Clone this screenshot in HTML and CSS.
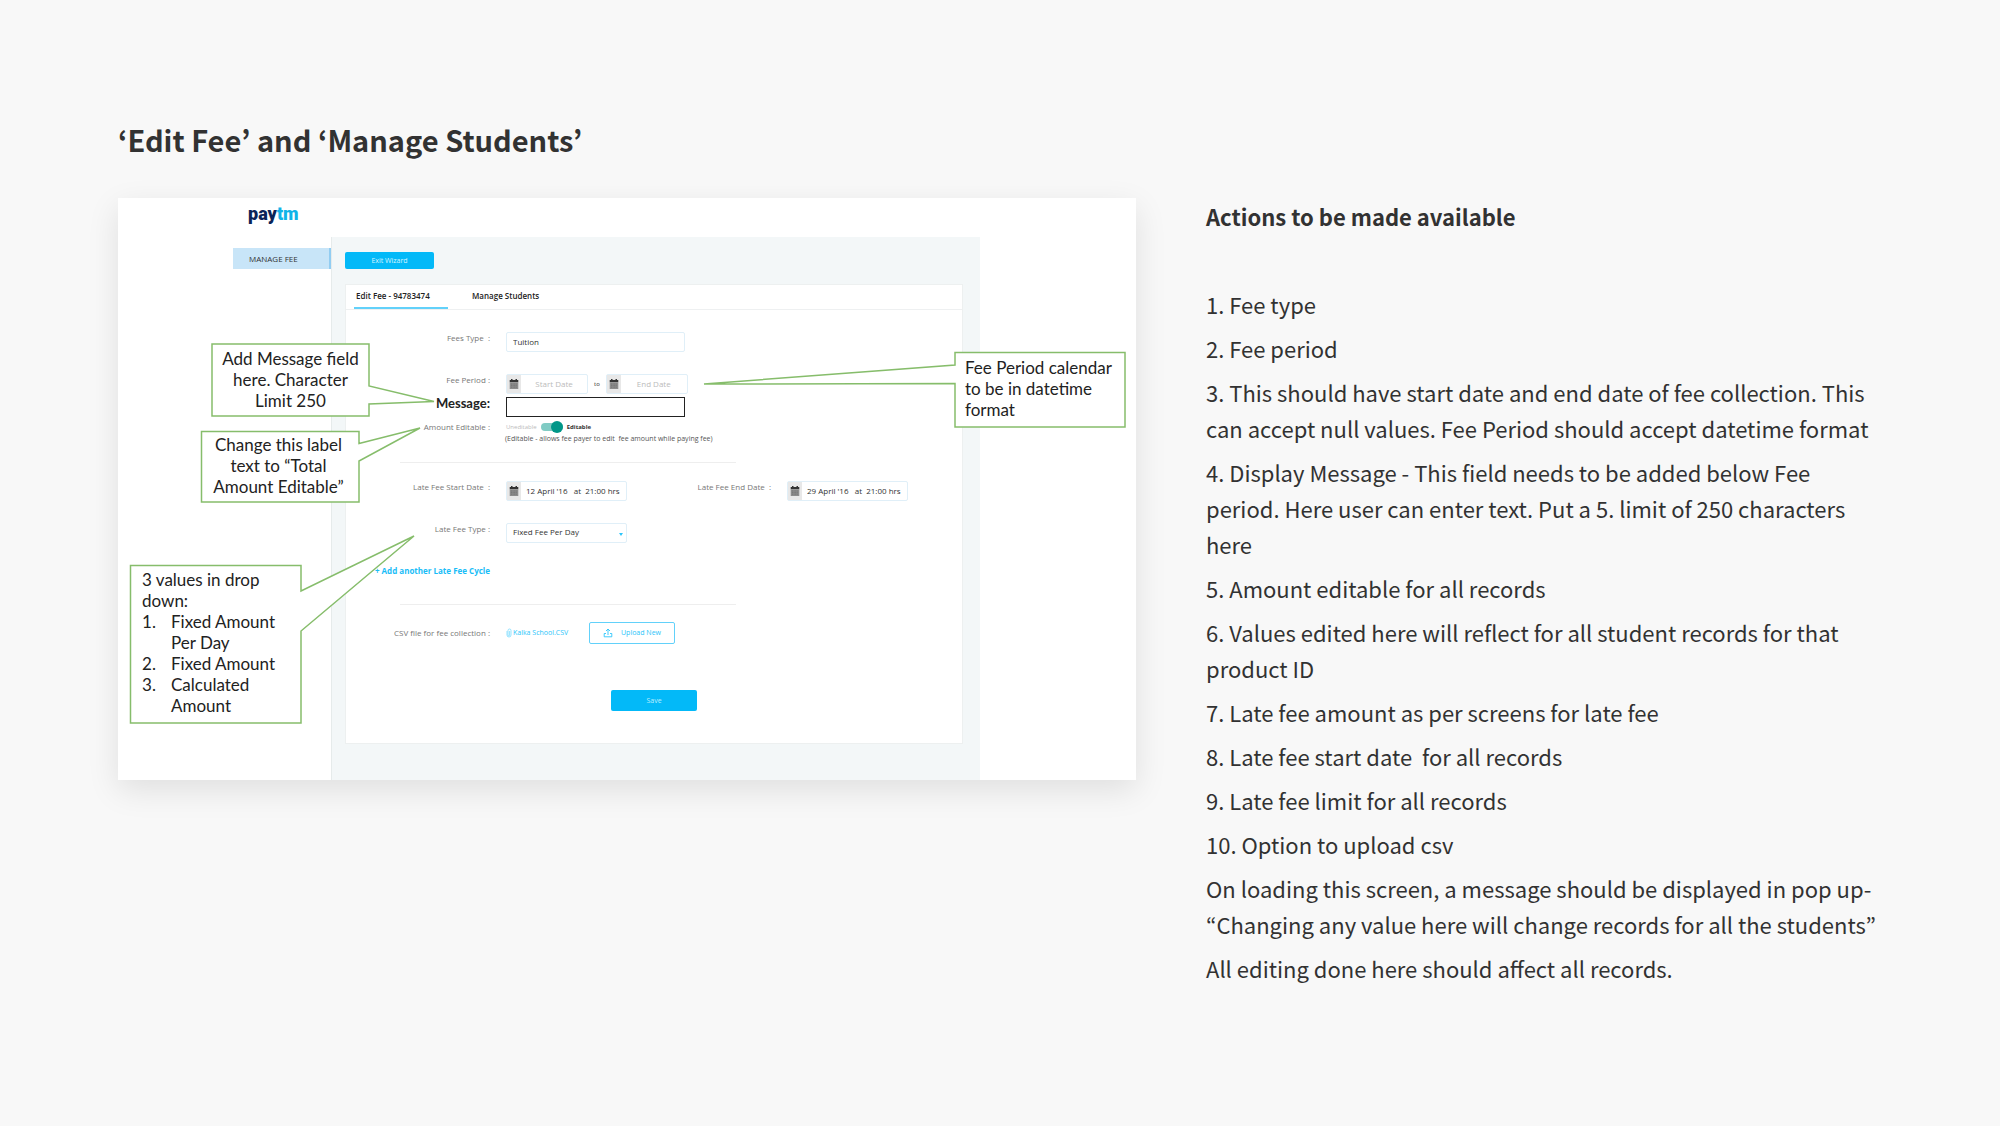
FILE: index.html
```html
<!DOCTYPE html>
<html lang="en">
<head>
<meta charset="utf-8">
<title>Edit Fee and Manage Students</title>
<link rel="stylesheet" href="styles.css">
</head>
<body>
<svg class="defs" aria-hidden="true">
  <symbol id="calendar" viewBox="0 0 10 10">
    <path d="M1 1h1V0h1.500v1h3V0H8v1h1.300v2.300H.7V1z" fill="#333"/>
    <path d="M.7 3.300h8.600V10H.7z" fill="#8c8c8c"/>
    <path d="M2 5h6M2 6.600h6M2 8.200h6" stroke="#666" stroke-width=".6" stroke-dasharray="1 .6"/>
  </symbol>
</svg>
<main class="page">
  <h1 class="title">‘Edit Fee’ and ‘Manage Students’</h1>
  <div class="columns">
    <section class="screen">
      <header class="top"><span class="logo">pay<span class="logo-tm">tm</span></span></header>
      <div class="body">
        <nav class="side"><a class="side-link" href="#fee">MANAGE FEE</a></nav>
        <div class="work">
          <button class="exit" type="button">Exit Wizard</button>
          <form class="panel">
            <div class="tabs">
              <a class="tab active" href="#edit">Edit Fee - 94783474</a>
              <a class="tab" href="#students">Manage Students</a>
            </div>
            <div class="row first">
              <label class="label" for="type">Fees Type &nbsp;:</label>
              <input class="input wide" id="type" type="text" value="Tuition">
            </div>
            <div class="row spaced">
              <label class="label" for="start">Fee Period :</label>
              <div class="period">
                <span class="date"><svg class="cal"><use href="#calendar"/></svg><input class="date-input" id="start" type="text" placeholder="Start Date"></span>
                <span class="to">to</span>
                <span class="date"><svg class="cal"><use href="#calendar"/></svg><input class="date-input" type="text" placeholder="End Date" aria-label="End date"></span>
              </div>
            </div>
            <div class="row message-row">
              <label class="label message-label" for="message">Message:</label>
              <input class="message wide" id="message" type="text">
            </div>
            <div class="row toggle-row">
              <label class="label" for="editable">Amount Editable :</label>
              <div class="toggle-line"><span class="off">Uneditable</span><input class="toggle" id="editable" type="checkbox" checked><span class="on">Editable</span></div>
            </div>
            <p class="hint">(Editable - allows fee payer to edit &nbsp;fee amount while paying fee)</p>
            <hr class="rule rule-top">
            <div class="row late">
              <label class="label" for="late-start">Late Fee Start Date &nbsp;:</label>
              <span class="date filled"><svg class="cal"><use href="#calendar"/></svg><input class="date-input" id="late-start" type="text" value="12 April '16 &nbsp; at &nbsp;21:00 hrs"></span>
              <label class="label end-label" for="late-end">Late Fee End Date &nbsp;:</label>
              <span class="date filled"><svg class="cal"><use href="#calendar"/></svg><input class="date-input" id="late-end" type="text" value="29 April '16 &nbsp; at &nbsp;21:00 hrs"></span>
            </div>
            <div class="row spaced">
              <label class="label" for="late-type">Late Fee Type :</label>
              <span class="select-wrap"><select class="input select" id="late-type"><option>Fixed Fee Per Day</option><option>Fixed Amount</option><option>Calculated Amount</option></select></span>
            </div>
            <div class="row spaced"><a class="label add" href="#cycle">+ Add another Late Fee Cycle</a></div>
            <hr class="rule rule-bottom">
            <div class="row upload-row">
              <span class="label">CSV file for fee collection :</span>
              <a class="file" href="#csv"><svg class="clip" viewBox="0 0 6 10"><path d="M1 3v4a2 2 0 0 0 4 0V2.500a1.500 1.500 0 0 0-3 0V7a.8.8 0 0 0 1.600 0V3" fill="none" stroke="#7bdcff" stroke-width=".8"/></svg>Kalka School.CSV</a>
              <button class="upload" type="button"><svg class="up" viewBox="0 0 10 10"><path d="M3 5.500H1.200v3.300h7.600V5.500H7M5 7V1M3 3l2-2 2 2" fill="none" stroke="#2cc5fa" stroke-width=".9"/></svg>Upload New</button>
            </div>
            <button class="save" type="button">Save</button>
          </form>
        </div>
      </div>
      <svg class="shapes" viewBox="0 0 1018 582" aria-hidden="true">
        <path d="M94 146H251V188L316 203.500L251 206V218H94Z"/>
        <path d="M83.500 233.500H241V245.500L302 230L241 263V304H83.500Z"/>
        <path d="M12.500 367.500H183V393L296 338L183 433V525H12.500Z"/>
        <path d="M837 154.500H1007V229H837V185.500L586 186L837 167Z"/>
      </svg>
      <p class="note note-message">Add Message field here. Character Limit 250</p>
      <p class="note note-label">Change this label text to “Total Amount Editable”</p>
      <div class="note note-values">3 values in drop down:
        <ol class="values"><li>Fixed Amount Per Day</li><li>Fixed Amount</li><li>Calculated Amount</li></ol>
      </div>
      <p class="note note-period">Fee Period calendar to be in datetime format</p>
    </section>
    <section class="actions">
      <h2 class="subtitle">Actions to be made available</h2>
      <p>1. Fee type</p>
      <p>2. Fee period</p>
      <p>3. This should have start date and end date of fee collection. This can accept null values. Fee Period should accept datetime format</p>
      <p>4. Display Message - This field needs to be added below Fee period. Here user can enter text. Put a 5. limit of 250 characters here</p>
      <p>5. Amount editable for all records</p>
      <p>6. Values edited here will reflect for all student records for that product ID</p>
      <p>7. Late fee amount as per screens for late fee</p>
      <p>8. Late fee start date &nbsp;for all records</p>
      <p>9. Late fee limit for all records</p>
      <p>10. Option to upload csv</p>
      <p>On loading this screen, a message should be displayed in pop up- “Changing any value here will change records for all the students”</p>
      <p>All editing done here should affect all records.</p>
    </section>
  </div>
</main>
</body>
</html>
```

FILE: styles.css
```css
* { box-sizing: border-box; }
body {
  margin: 0;
  background: #f8f8f8;
  color: #323232;
  font-family: "Noto Sans CJK KR", "Noto Sans", sans-serif;
}
p, h1, h2, hr { margin: 0; }
a { text-decoration: none; color: inherit; }
.defs { display: none; }
.page { padding: 116px 118px; }
.title { font-size: 29px; line-height: 46px; font-weight: 700; }
.columns {
  display: grid;
  grid-template-columns: 1018fr 676fr;
  gap: 70px;
  align-items: start;
  margin-top: 36px;
}

/* Explanatory text */
.actions {
  display: flex;
  flex-direction: column;
  gap: 8px;
  font-size: 22px;
  line-height: 36px;
}
.subtitle { font-size: 22px; line-height: 36px; font-weight: 700; margin-bottom: 44px; }

/* Annotated screen */
.screen {
  position: relative;
  background: #fff;
  box-shadow: 0 10px 30px rgba(0, 0, 0, .1);
  font-family: "Open Sans", "Noto Sans", sans-serif;
  font-size: 8px;
  line-height: 12px;
  color: #333;
}
.top { height: 39px; padding: 6px 0 0 130px; }
.logo {
  font-family: Roboto, sans-serif;
  font-size: 18px;
  line-height: 20px;
  font-weight: 900;
  color: #0b2458;
}
.logo-tm { color: #10b4e8; }
.body { display: grid; grid-template-columns: 213fr 649fr 156fr; }
.side { padding-top: 11px; display: flex; justify-content: flex-end; align-items: flex-start; }
.side-link {
  width: 98px;
  padding-left: 16px;
  line-height: 21px;
  background: #c8e5f8;
  border-right: 2px solid #92cdf2;
}
.work { padding: 15px 17px 36px 13px; background: #f3f7f8; border-left: 1px solid #e6ebeb; }
button { font: inherit; font-size: 7px; padding: 0; border: 0; border-radius: 2px; display: block; }
.exit { width: 89px; height: 17px; background: #03b9f8; color: #d5f4ff; }
.panel { margin: 15px 0 0; background: #fff; border: 1px solid #edf0f0; padding-bottom: 32px; }
.tabs { display: flex; gap: 22px; padding-left: 8px; border-bottom: 1px solid #eef0f1; }
.tab { width: 94px; padding: 0 2px; line-height: 22px; border-bottom: 2px solid transparent; font-weight: 600; color: #222; }
.active { border-color: #62d1fa; }

.row { display: flex; gap: 16px; align-items: flex-start; }
.first, .spaced { margin-top: 22px; }
.label { flex: none; width: 144px; text-align: right; color: #777; white-space: nowrap; }
input, select { font: inherit; color: #333; margin: 0; }
.input { height: 20px; padding: 0 6px 2px; border: 1px solid #e0eff8; border-radius: 2px; background: #fff; }
.wide { width: 179px; }
.period { display: flex; align-items: center; gap: 6px; }
.to { font-size: 6px; }
.date { display: flex; align-items: center; width: 82px; height: 20px; border: 1px solid #e0eff8; border-radius: 2px; }
.filled { width: 121px; }
.cal { flex: none; width: 14px; height: 18px; padding: 4px 2px; background: #e8e8e8; }
.date-input { flex: 1; min-width: 0; height: 18px; border: 0; padding: 0 5px 2px; background: transparent; }
.date-input::placeholder { color: #bbb; text-align: center; opacity: 1; }
.message-row { margin-top: 3px; }
.message-label { font-family: "Lato", sans-serif; font-size: 13px; font-weight: 700; color: #222; }
.message { height: 20px; border: 1px solid #222; padding: 0 6px; background: #fff; }
.toggle-row { margin-top: 4px; }
.toggle-line { display: flex; align-items: center; gap: 4px; height: 12px; font-size: 6px; }
.off { color: #bbb; }
.on { font-weight: 700; }
.toggle {
  appearance: none;
  display: flex;
  justify-content: flex-end;
  align-items: center;
  width: 22px;
  height: 8px;
  border-radius: 4px;
  background: #80cbc4;
}
.toggle::before { content: ""; width: 12px; height: 12px; border-radius: 50%; background: #009688; flex: none; }
.hint { padding-left: 159px; font-size: 7px; color: #555; }
.rule { width: 336px; height: 1px; border: 0; background: #eee; margin-left: 54px; }
.rule-top { margin-top: 17px; }
.late { margin-top: 18px; }
.end-label { width: 128px; }
.select-wrap { position: relative; }
.select { appearance: none; width: 121px; }
.select-wrap::after {
  content: "";
  position: absolute;
  right: 4px;
  top: 10px;
  border: 2px solid transparent;
  border-top: 3px solid #2cc5fa;
}
.add { color: #19bdf7; font-weight: 700; }
.rule-bottom { margin-top: 27px; }
.upload-row { margin-top: 17px; align-items: center; }
.file { display: flex; align-items: center; gap: 1px; width: 67px; font-size: 7px; color: #2cc5fa; white-space: nowrap; }
.clip { width: 6px; height: 10px; }
.upload {
  display: flex;
  align-items: center;
  justify-content: center;
  gap: 8px;
  width: 86px;
  height: 22px;
  border: 1px solid #62d1fa;
  background: #fff;
  color: #2cc5fa;
}
.up { width: 10px; height: 10px; }
.save { width: 86px; height: 21px; margin: 46px 0 0 265px; background: #03b9f8; color: #bdeeff; }

/* Callouts laid over the screen */
.shapes { position: absolute; left: 0; top: 0; width: 1018px; height: 582px; fill: #fff; stroke: #86bd6b; stroke-width: 1.5; }
.note { position: absolute; font-family: "Lato", sans-serif; font-size: 17px; line-height: 21px; color: #222; text-align: center; }
.note-message { left: 94px; top: 150px; width: 157px; padding: 0 8px; }
.note-label { left: 82px; top: 236px; width: 157px; padding: 0 8px; }
.note-values { left: 24px; top: 371px; width: 150px; text-align: left; }
.note-period { left: 847px; top: 159px; width: 156px; text-align: left; }
.values { margin: 0; padding-left: 29px; list-style: none; counter-reset: value; }
.values li { counter-increment: value; }
.values li::before { content: counter(value) "."; float: left; margin-left: -29px; }
```
